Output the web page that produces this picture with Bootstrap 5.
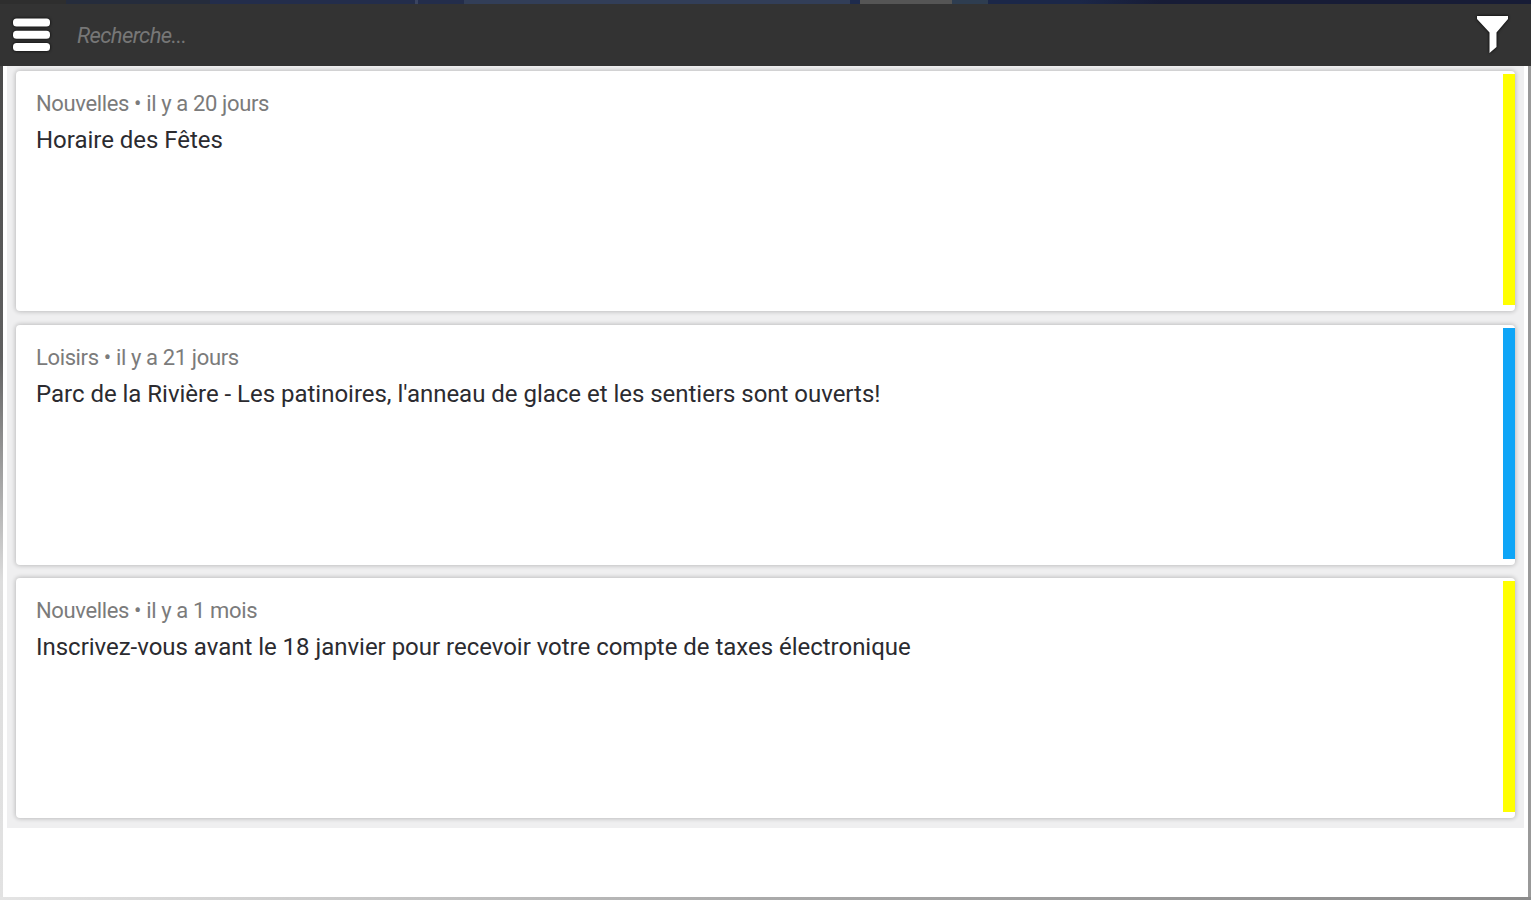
<!DOCTYPE html>
<html lang="fr">
<head>
  <meta charset="UTF-8" />
  <meta name="viewport" content="width=device-width, initial-scale=1.0"/>
  <title>Nouvelles</title>
  <link href="https://cdn.jsdelivr.net/npm/bootstrap@5.3.3/dist/css/bootstrap.min.css" rel="stylesheet">
  <style>
    body {
      font-family: Roboto, "Liberation Sans", sans-serif;
      background: #fff;
    }
    .top-strip {
      height: 4px;
      background: linear-gradient(90deg, #2e2e2e 0 66px, #252c3c 66px 210px, #232d4b 210px 415px, #3a4460 415px 418px, #232d4b 418px 464px, #323e58 464px 850px, #1e2b4d 850px 860px, #555 860px 952px, #2e3d50 952px 988px, #1b2748 988px 1080px, #171c36 1160px);
    }
    .search-bar {
      height: 62px;
      background: #333;
      padding: 0 21px 0 12px;
    }
    .search-input, .search-input:focus {
      color: #ccc;
      font-size: 22px;
      font-style: italic;
      letter-spacing: -.6px;
      margin-left: 27px;
    }
    .search-input::placeholder {
      color: #777;
      opacity: 1;
    }
    .icon-shadow {
      filter: drop-shadow(0 0 1.5px #000);
    }
    .side-left {
      width: 3px;
      background: linear-gradient(#4a4a4a 0%, #606060 35%, #ddd 62%, #e2e2e2 100%);
    }
    .side-right {
      width: 3px;
      background: #999;
    }
    .bottom-edge {
      height: 3px;
      background: linear-gradient(90deg, #e4e4e4, #aaa 50%, #8c8c8c);
    }
    .news-list {
      background: #efeff0;
      margin: 0 4px;
      padding: 5px 9px 10px;
      gap: 13.6px;
    }
    .news-card {
      height: 240px;
      border-radius: 4px;
      background: #fff;
      box-shadow: 0 0 4px 1px rgba(0, 0, 0, .2);
      padding: 3px 0 6px 20px;
    }
    .news-meta {
      color: #7b7b7b;
      font-size: 22px;
      line-height: 30px;
      letter-spacing: -.37px;
      padding-top: 15px;
    }
    .news-title {
      color: #2b2b30;
      font-size: 24px;
      line-height: 36px;
      letter-spacing: -.02px;
      margin-top: 3px;
    }
    .stripe {
      width: 12px;
    }
    .stripe-news {
      background: #ff0;
    }
    .stripe-loisirs {
      background: #0ea5f7;
    }
  </style>
</head>
<body class="vh-100 d-flex flex-column overflow-hidden">
  <div class="top-strip"></div>

  <!-- Barre de recherche -->
  <nav class="search-bar d-flex align-items-center">
    <button class="btn p-0 border-0 d-flex" type="button" aria-label="Menu">
      <svg class="icon-shadow" width="38" height="40" viewBox="0 0 38 40">
        <g fill="#fff">
          <rect x="1" y="3.5" width="37" height="8" rx="3.5"/>
          <rect x="1" y="15.800" width="37" height="8" rx="3.5"/>
          <rect x="1" y="28" width="37" height="8" rx="3.5"/>
        </g>
      </svg>
    </button>
    <input type="text" class="search-input form-control-plaintext flex-grow-1 p-0" placeholder="Recherche...">
    <button class="btn p-0 border-0 d-flex" type="button" aria-label="Filtrer">
      <svg class="icon-shadow" width="34" height="42" viewBox="0 0 34 42">
        <path d="M1 2H32V5L20.500 18.500V33L13.500 39V18.500L1 5Z" fill="#fff"/>
      </svg>
    </button>
  </nav>

  <!-- Liste des nouvelles -->
  <div class="d-flex flex-grow-1">
    <div class="side-left"></div>
    <main class="flex-grow-1">
      <div class="news-list d-flex flex-column">
        <article class="news-card d-flex">
          <div class="flex-grow-1">
            <div class="news-meta">Nouvelles • il y a 20 jours</div>
            <div class="news-title">Horaire des Fêtes</div>
          </div>
          <div class="stripe stripe-news"></div>
        </article>
        <article class="news-card d-flex">
          <div class="flex-grow-1">
            <div class="news-meta">Loisirs • il y a 21 jours</div>
            <div class="news-title">Parc de la Rivière - Les patinoires, l'anneau de glace et les sentiers sont ouverts!</div>
          </div>
          <div class="stripe stripe-loisirs"></div>
        </article>
        <article class="news-card d-flex">
          <div class="flex-grow-1">
            <div class="news-meta">Nouvelles • il y a 1 mois</div>
            <div class="news-title">Inscrivez-vous avant le 18 janvier pour recevoir votre compte de taxes électronique</div>
          </div>
          <div class="stripe stripe-news"></div>
        </article>
      </div>
    </main>
    <div class="side-right"></div>
  </div>
  <div class="bottom-edge"></div>

  <script src="https://cdn.jsdelivr.net/npm/bootstrap@5.3.3/dist/js/bootstrap.bundle.min.js"></script>
</body>
</html>
